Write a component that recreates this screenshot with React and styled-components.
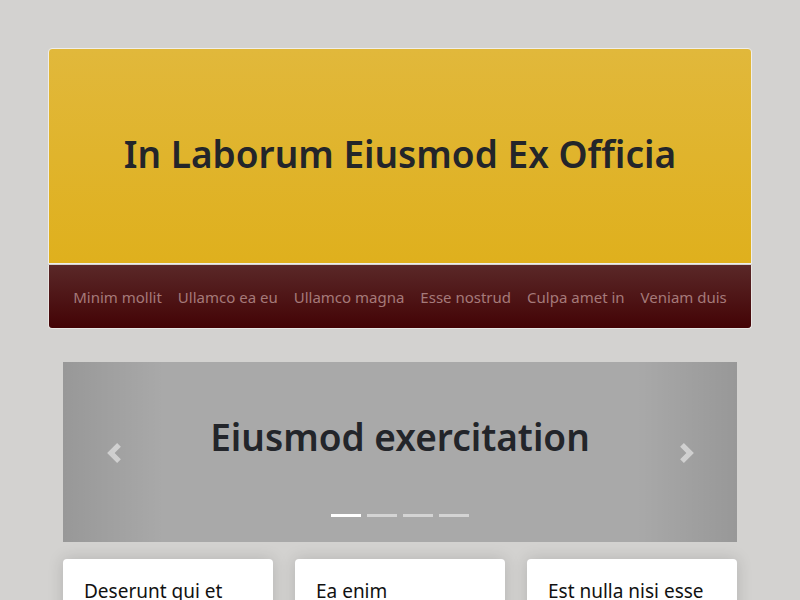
import styled, { createGlobalStyle } from "styled-components";

const GlobalStyle = createGlobalStyle`
  html, body {
    margin: 0;
    padding: 0;
    background: #d3d2d0;
    font-family: "Noto Sans", "Open Sans", sans-serif;
    color: #212529;
  }
  * { box-sizing: border-box; }
`;

const Page = styled.div`
  width: 704px;
  margin: 0 auto;
  padding-top: 48px;
`;

const Header = styled.header`
  height: 216px;
  display: flex;
  align-items: center;
  justify-content: center;
  background: linear-gradient(to bottom, #e1b83b, #dfb01d);
  border: 1px solid #efeeec;
  border-radius: 4px 4px 0 0;
`;

const Title = styled.h1`
  margin: 0;
  margin-top: -6px;
  font-size: 37px;
  font-weight: 600;
  color: #23252a;
`;

const Nav = styled.nav`
  margin-top: 1px;
  height: 64px;
  display: flex;
  align-items: center;
  justify-content: center;
  background: linear-gradient(to bottom, #5a2828, #430305);
  border: 1px solid #e8e6e4;
  border-top: none;
  border-radius: 0 0 4px 4px;
`;

const NavLink = styled.a`
  padding: 0 8px;
  font-size: 15px;
  color: #a57a7a;
  text-decoration: none;
`;

const Carousel = styled.section`
  position: relative;
  margin: 33px 15px 0;
  height: 180px;
  background: #a9a9a9;
  display: flex;
  justify-content: center;
`;

const Caption = styled.h2`
  margin: 49px 0 0;
  font-size: 37px;
  font-weight: 600;
  color: #23252a;
`;

const Control = styled.div`
  position: absolute;
  top: 0;
  bottom: 0;
  width: 101px;
  display: flex;
  align-items: center;
  justify-content: center;
  ${(p) => (p.$side === "left" ? "left: 0;" : "right: 0;")}
  background: linear-gradient(
    ${(p) => (p.$side === "left" ? "to right" : "to left")},
    rgba(0, 0, 0, 0.1),
    rgba(0, 0, 0, 0)
  );
  padding-top: 2px;
`;

const Indicators = styled.div`
  position: absolute;
  left: 0;
  right: 0;
  bottom: 25px;
  display: flex;
  justify-content: center;
`;

const Indicator = styled.span`
  width: 30px;
  height: 3px;
  margin: 0 3px;
  background: #fff;
  opacity: ${(p) => (p.$active ? 1 : 0.5)};
`;

const Cards = styled.div`
  margin: 17px 15px 0;
  display: grid;
  grid-template-columns: repeat(3, 1fr);
  gap: 22px;
`;

const Card = styled.div`
  background: #fff;
  border-radius: 4px;
  box-shadow: 0 0 16px rgba(0, 0, 0, 0.15);
  padding: 19px 21px;
  height: 120px;
`;

const CardTitle = styled.h3`
  margin: 0;
  font-size: 19px;
  font-weight: 400;
  color: #111;
`;

const Chevron = ({ dir }) => (
  <svg width="20" height="20" viewBox="0 0 8 8" fill="#fff" opacity="0.5">
    {dir === "left" ? (
      <path d="M5.25 0l-4 4 4 4 1.5-1.5L4.25 4l2.5-2.5L5.25 0z" />
    ) : (
      <path d="M2.75 0l-1.5 1.5L3.75 4l-2.5 2.5L2.75 8l4-4-4-4z" />
    )}
  </svg>
);

const links = [
  "Minim mollit",
  "Ullamco ea eu",
  "Ullamco magna",
  "Esse nostrud",
  "Culpa amet in",
  "Veniam duis",
];

const cards = ["Deserunt qui et", "Ea enim", "Est nulla nisi esse"];

export default function App() {
  return (
    <>
      <GlobalStyle />
      <Page>
        <Header>
          <Title>In Laborum Eiusmod Ex Officia</Title>
        </Header>
        <Nav>
          {links.map((l) => (
            <NavLink key={l} href="#">
              {l}
            </NavLink>
          ))}
        </Nav>
        <Carousel>
          <Control $side="left">
            <Chevron dir="left" />
          </Control>
          <Caption>Eiusmod exercitation</Caption>
          <Control $side="right">
            <Chevron dir="right" />
          </Control>
          <Indicators>
            {[0, 1, 2, 3].map((i) => (
              <Indicator key={i} $active={i === 0} />
            ))}
          </Indicators>
        </Carousel>
        <Cards>
          {cards.map((c) => (
            <Card key={c}>
              <CardTitle>{c}</CardTitle>
            </Card>
          ))}
        </Cards>
      </Page>
    </>
  );
}
